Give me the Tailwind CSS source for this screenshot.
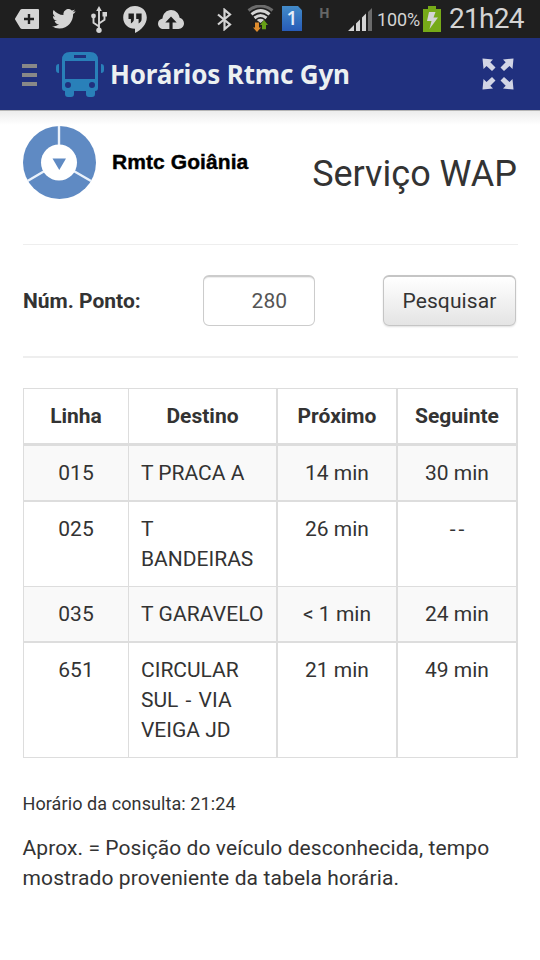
<!DOCTYPE html>
<html lang="pt-BR">
<head>
<meta charset="utf-8">
<title>Horários Rtmc Gyn</title>
<script src="https://cdn.jsdelivr.net/npm/@tailwindcss/browser@4"></script>
</head>
<body class="w-[540px] h-[960px] overflow-hidden bg-white text-[#333333] font-[Roboto,sans-serif] text-[21px] leading-[30px]">

<!-- Status bar -->
<div class="flex h-[38px] bg-[#1f1f1f] text-[#d4d4d4]">
  <svg class="ml-[15px] mt-[9px] h-5 w-6 shrink-0" viewBox="0 0 24 20"><path fill="#d4d4d4" d="M7 0h16q1 0 1 1v18q0 1-1 1H7q-1 0-1.600-.8L.4 11q-.8-1 0-2L5.400.8Q6 0 7 0z"/><path d="M14 5v10M9 10h10" stroke="#1f1f1f" stroke-width="2.400"/></svg>
  <svg class="ml-[13px] mt-[9px] h-[19.500px] w-[23.500px] shrink-0" viewBox="0 2.200 24 19.500" preserveAspectRatio="none"><path fill="#d4d4d4" d="M23.953 4.57a10 10 0 01-2.825.775 4.958 4.958 0 002.163-2.723c-.951.555-2.005.959-3.127 1.184a4.92 4.92 0 00-8.384 4.482C7.69 8.095 4.067 6.13 1.64 3.162a4.822 4.822 0 00-.666 2.475c0 1.71.87 3.213 2.188 4.096a4.904 4.904 0 01-2.228-.616v.06a4.923 4.923 0 003.946 4.827 4.996 4.996 0 01-2.212.085 4.936 4.936 0 004.604 3.417 9.867 9.867 0 01-6.102 2.105c-.39 0-.779-.023-1.17-.067a13.995 13.995 0 007.557 2.209c9.053 0 13.998-7.496 13.998-13.985 0-.21 0-.42-.015-.63A9.935 9.935 0 0024 4.59z"/></svg>
  <svg class="ml-[15.500px] mt-[6px] h-[27px] w-4 shrink-0" viewBox="0 0 16 27"><path d="M8 4v20M8 20.500L2.500 16.800V10M8 17.500l5.500-3.700V8" fill="none" stroke="#d4d4d4" stroke-width="1.900"/><path fill="#d4d4d4" d="M8 0l2.800 5H5.200zM11.500 6H16v4.500h-4.500z"/><circle cx="2.500" cy="10" r="2.400" fill="#d4d4d4"/><circle cx="8" cy="24.200" r="2.700" fill="#d4d4d4"/></svg>
  <svg class="ml-4 mt-[6px] h-[27px] w-6 shrink-0" viewBox="0 0 24 27"><path fill="#d4d4d4" d="M12 0C5 0 .2 4.900.2 11.500S5 22.800 12 22.800V27c6.500-3.200 11.800-9 11.800-15.500S19 0 12 0z"/><path fill="#1f1f1f" d="M5.500 7.500h5.400v5.600q0 3-3 4.300V13H5.500zM13.200 7.500h5.400v5.600q0 3-3 4.300V13h-2.400z"/></svg>
  <svg class="ml-[11px] mt-[10px] h-[19px] w-[26px] shrink-0" viewBox="0 0 26 19"><path fill="#d4d4d4" d="M5.500 19C2.500 19 0 16.700 0 13.700c0-2.700 1.900-4.700 4.500-5.200C5 3.500 8.700 0 13 0c4.500 0 8 3.300 8.600 7.700C24.200 8.400 26 10.700 26 13.300 26 16.500 23.500 19 20.500 19z"/><path fill="#1f1f1f" d="M13 6.500l5.700 6h-4.100V19h-3.200v-6.500H7.300z"/></svg>
  <svg class="ml-[33px] mt-2 h-[23px] w-[15px] shrink-0" viewBox="0 0 15 23"><path d="M1 6.500l12 10-5.500 4.700V1.800L13 6.500l-12 10" fill="none" stroke="#d4d4d4" stroke-width="2.200"/></svg>
  <svg class="ml-[15px] mt-[5px] h-[27px] w-[27px] shrink-0" viewBox="0 0 27 27"><g fill="none" stroke-width="3"><path d="M1.500 5.500Q13.500-3.500 25.500 5.500" stroke="#6b6b6b"/><path d="M4.500 9.300Q13.500 2 22.500 9.300M7.500 13Q13.500 8 19.500 13" stroke="#d4d4d4"/></g><path d="M9.800 15q3.700-2.600 7.400 0l-3.700 3z" fill="#d4d4d4"/><path fill="#df8c2d" d="M8 17.500h4v5h2l-4 4.500-4-4.500h2z"/><path fill="#669f16" d="M17 15l4 5h-2v4.300h-4V20h-2z"/></svg>
  <div class="ml-2 mt-[6px] h-[25px] w-5 shrink-0 bg-linear-to-b from-[#438bc9] to-[#285bb7] [clip-path:polygon(0_0,80%_0,100%_17%,100%_100%,0_100%)] text-center font-['Open_Sans',sans-serif] text-[19px] font-semibold leading-[25px] text-[#e4eef9]">1</div>
  <div class="ml-[17px] mt-[5px] w-[10px] shrink-0 font-['Open_Sans',sans-serif] text-[14px] font-bold leading-[15px] text-[#666]">H</div>
  <svg class="ml-[19px] mt-2 h-[23px] w-6 shrink-0" viewBox="0 0 24 23"><path fill="#d4d4d4" d="M0 23l6-6v6zM8 15.500l4-4V23H8zM14 9.500l4-4V23h-4z"/><path fill="#6b6b6b" d="M20 4l4-4v23h-4z"/></svg>
  <div class="ml-[5px] mt-[5px] w-[44px] shrink-0 whitespace-nowrap text-[18px] tracking-[-0.100px]">100%</div>
  <svg class="ml-[2px] mt-[6px] h-[26px] w-[18px] shrink-0" viewBox="0 0 18 26"><path fill="#76aa18" d="M5 0h8v3h5v23H0V3h5z"/><path fill="#d4d4d4" d="M6 6h6.500L10.500 11.500H15L6.500 23l2-8H4z"/></svg>
  <div class="ml-[8px] mt-[4px] shrink-0 whitespace-nowrap text-[28px] tracking-[-0.700px]">21h24</div>
</div>

<!-- App bar -->
<header class="flex h-[72px] items-start bg-[#20307e]">
  <div class="ml-[22px] mt-[26px] flex w-[15px] flex-col gap-[5px]">
    <i class="h-1 bg-[#888888]"></i><i class="h-1 bg-[#888888]"></i><i class="h-1 bg-[#888888]"></i>
  </div>
  <svg class="ml-[19px] mt-[14px] h-[45px] w-12" viewBox="0 0 48 45"><g fill="#2980b9"><path fill-rule="evenodd" d="M14 0h20q8 0 8 8v28q0 3-3 3H9q-3 0-3-3V8q0-8 8-8zM18 3v3h12V3zM9 9v18h30V9zM12 30a3 3 0 100 6 3 3 0 000-6zM36 30a3 3 0 100 6 3 3 0 000-6z"/><path d="M9 38h9v4q0 3-3 3h-3q-3 0-3-3zM30 38h9v4q0 3-3 3h-3q-3 0-3-3zM3 12v9q-3 0-3-3v-3q0-3 3-3zM45 12v9q3 0 3-3v-3q0-3-3-3z"/></g></svg>
  <h1 class="ml-[6px] mt-[21px] whitespace-nowrap font-['Noto_Sans',sans-serif] text-[26px] font-bold tracking-[-0.170px] text-[#ecf0f1]">Horários Rtmc Gyn</h1>
  <svg class="ml-auto mr-[26px] mt-5 h-8 w-8" viewBox="0 0 32 32"><g fill="#d2d5e5"><path d="M.5.500l10.500 1-2.700 2.800L13.500 9.500 10 13 4.500 8 1.500 11z"/><path transform="translate(32 0) scale(-1 1)" d="M.5.500l10.500 1-2.700 2.800L13.500 9.500 10 13 4.500 8 1.500 11z"/><path transform="translate(0 32) scale(1 -1)" d="M.5.500l10.500 1-2.700 2.800L13.500 9.500 10 13 4.500 8 1.500 11z"/><path transform="translate(32 32) scale(-1 -1)" d="M.5.500l10.500 1-2.700 2.800L13.500 9.500 10 13 4.500 8 1.500 11z"/></g></svg>
</header>
<div class="h-[15px] border-t border-[#b5b5b5] bg-linear-to-b from-[#ececec] to-white"></div>

<main class="ml-[23px] w-[495px]">
  <!-- Brand and page title -->
  <div class="flex h-[120px] items-start border-b border-[#eeeeee]">
    <svg class="mt-px h-[73px] w-[73px]" viewBox="0 0 73 73"><circle cx="36.500" cy="36.500" r="36.500" fill="#5f8ac3"/><path d="M36 36.500V0M36 36.500L4.500 55M36 36.500L68 55" stroke="#e9f1fb" stroke-width="2.400"/><circle cx="36" cy="36.500" r="18" fill="#fff"/><path fill="#5f8ac3" d="M29.500 32.500H43l-6.700 11.500z"/></svg>
    <div class="ml-[16px] mt-[22px] whitespace-nowrap font-['Liberation_Sans',sans-serif] text-[21px] font-bold tracking-[0.080px] text-black [-webkit-text-stroke:0.4px_black]">Rmtc Goiânia</div>
    <h2 class="ml-auto mr-px mt-[34px] whitespace-nowrap text-[36px]">Serviço WAP</h2>
  </div>

  <!-- Search form -->
  <form class="flex h-[113px] items-start border-b-2 border-[#eeeeee] pt-[30px]">
    <label class="mt-[11px] w-[180px] whitespace-nowrap font-bold">Núm. Ponto:</label>
    <div class="h-[51px] w-[112px] rounded-[6px] border border-t-2 border-[#cccccc] pr-[27px] pt-[9px] text-right text-[#555555] shadow-[inset_0_1px_1px_#00000013]">280</div>
    <button type="button" class="ml-auto mr-[2px] h-[51px] w-[133px] rounded-[6px] border border-t-2 border-[#c5c5c5] bg-linear-to-b from-white to-[#e4e4e4] pb-px text-center shadow-[0_1px_2px_#00000020] tracking-[0.120px]">Pesquisar</button>
  </form>

  <!-- Timetable -->
  <table class="mt-[30px] w-[495px] table-fixed border-separate border-spacing-0 border-l border-t border-[#dddddd] text-center [&_td]:border-[#dddddd] [&_td]:px-3 [&_td]:pt-3 [&_td]:align-top [&_th]:border-b-3 [&_th]:border-[#dddddd] [&_th]:p-0 [&_th]:pt-3 [&_th]:align-top">
    <colgroup><col class="w-[105px]"><col class="w-[149px]"><col class="w-[120px]"><col class="w-[120px]"></colgroup>
    <thead>
      <tr class="h-[57px]"><th class="border-r">Linha</th><th class="border-r-2">Destino</th><th class="border-r-2">Próximo</th><th class="border-r-2">Seguinte</th></tr>
    </thead>
    <tbody>
      <tr class="h-[56px] bg-[#f9f9f9] [&_td]:border-b-2"><td class="border-r">015</td><td class="border-r-2 whitespace-nowrap text-left">T PRACA A</td><td class="border-r-2">14 min</td><td class="border-r-2">30 min</td></tr>
      <tr class="h-[85px] [&_td]:border-b"><td class="border-r">025</td><td class="border-r-2 text-left">T<br>BANDEIRAS</td><td class="border-r-2">26 min</td><td class="border-r-2"><span class="-mr-[3px] tracking-[3px]">--</span></td></tr>
      <tr class="h-[56px] bg-[#f9f9f9] [&_td]:border-b-2"><td class="border-r">035</td><td class="border-r-2 whitespace-nowrap text-left tracking-[0.120px]">T GARAVELO</td><td class="border-r-2">&lt; 1 min</td><td class="border-r-2">24 min</td></tr>
      <tr class="h-[115px] [&_td]:border-b"><td class="border-r">651</td><td class="border-r-2 text-left">CIRCULAR<br><span class="[word-spacing:2px]">SUL - VIA</span><br>VEIGA JD</td><td class="border-r-2">21 min</td><td class="border-r-2">49 min</td></tr>
    </tbody>
  </table>

  <p class="-ml-[0.500px] mt-[31px] whitespace-nowrap text-[18px] tracking-[0.090px]">Horário da consulta: 21:24</p>
  <p class="-ml-[0.500px] mt-[14px] whitespace-nowrap tracking-[0.080px]">Aprox. = Posição do veículo desconhecida, tempo<br><span class="tracking-[0.120px]">mostrado proveniente da tabela horária.</span></p>
</main>
</body>
</html>
